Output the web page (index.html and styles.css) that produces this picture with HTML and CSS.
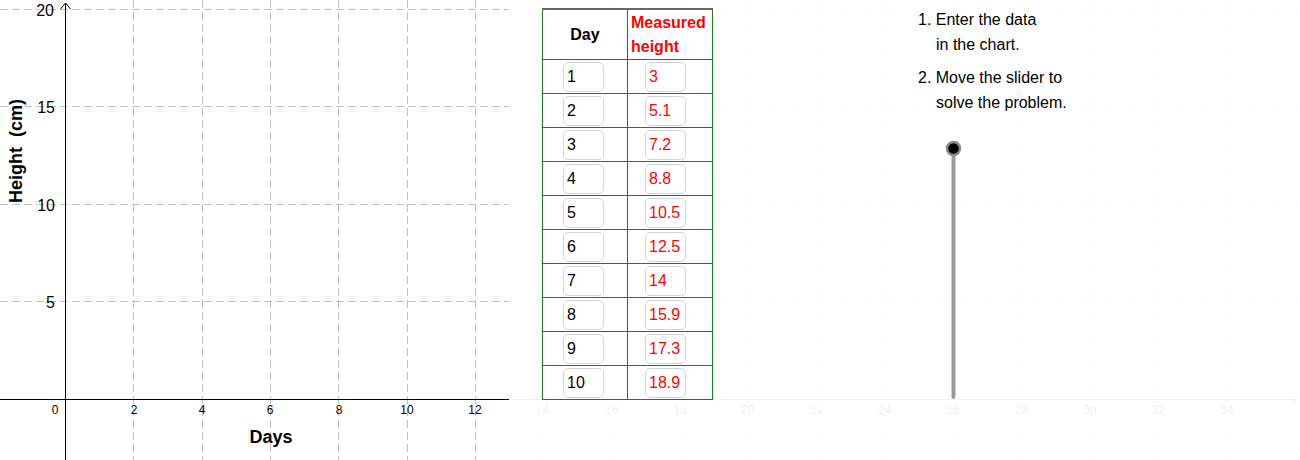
FILE: index.html
```html
<!DOCTYPE html>
<html>
<head>
<link rel="stylesheet" href="styles.css">
</head>
<body>
<div id="applet">
    <svg class="graph" width="1300" height="460" viewBox="0 0 1300 460">
        <!-- grid -->
        <g class="grid">
            <line x1="133.5" y1="0" x2="133.5" y2="460"/>
            <line x1="202.5" y1="0" x2="202.5" y2="460"/>
            <line x1="270.5" y1="0" x2="270.5" y2="460"/>
            <line x1="338.5" y1="0" x2="338.5" y2="460"/>
            <line x1="407.5" y1="0" x2="407.5" y2="460"/>
            <line x1="475.5" y1="0" x2="475.5" y2="460"/>
            <line x1="543.5" y1="0" x2="543.5" y2="460"/>
            <line x1="611.5" y1="0" x2="611.5" y2="460"/>
            <line x1="680.5" y1="0" x2="680.5" y2="460"/>
            <line x1="748.5" y1="0" x2="748.5" y2="460"/>
            <line x1="816.5" y1="0" x2="816.5" y2="460"/>
            <line x1="885.5" y1="0" x2="885.5" y2="460"/>
            <line x1="953.5" y1="0" x2="953.5" y2="460"/>
            <line x1="1021.5" y1="0" x2="1021.5" y2="460"/>
            <line x1="1090.5" y1="0" x2="1090.5" y2="460"/>
            <line x1="1158.5" y1="0" x2="1158.5" y2="460"/>
            <line x1="1226.5" y1="0" x2="1226.5" y2="460"/>
            <line x1="0" y1="9.5" x2="1300" y2="9.5"/>
            <line x1="0" y1="106.5" x2="1300" y2="106.5"/>
            <line x1="0" y1="204.5" x2="1300" y2="204.5"/>
            <line x1="0" y1="301.5" x2="1300" y2="301.5"/>
        </g>
        <!-- axes -->
        <g class="axis">
            <line x1="0" y1="399.5" x2="1297" y2="399.5"/>
            <polyline points="1291,394.5 1297,399.5 1291,404.5"/>
            <line x1="65.5" y1="460" x2="65.5" y2="3"/>
            <polyline points="60.5,9 65.5,3 70.5,9"/>
        </g>
        <g class="xlabels">
            <text x="55" y="414">0</text>
            <text x="134" y="414">2</text>
            <text x="202" y="414">4</text>
            <text x="270" y="414">6</text>
            <text x="339" y="414">8</text>
            <text x="407" y="414">10</text>
            <text x="475" y="414">12</text>
            <text x="543" y="414">14</text>
            <text x="612" y="414">16</text>
            <text x="680" y="414">18</text>
            <text x="748" y="414">20</text>
            <text x="817" y="414">22</text>
            <text x="885" y="414">24</text>
            <text x="953" y="414">26</text>
            <text x="1022" y="414">28</text>
            <text x="1090" y="414">30</text>
            <text x="1158" y="414">32</text>
            <text x="1227" y="414">34</text>
        </g>
        <g class="ylabels">
            <text x="54" y="16">20</text>
            <text x="55" y="113">15</text>
            <text x="55" y="211">10</text>
            <text x="55" y="308">5</text>
        </g>
        <text class="axis-title" x="271" y="443">Days</text>
        <text class="axis-title" transform="translate(22 151) rotate(-90)">Height  (cm)</text>
        <!-- faded right side -->
        <rect class="fade" x="509" y="0" width="791" height="460"/>
        <!-- slider -->
        <line class="slider-track" x1="953.5" y1="149" x2="953.5" y2="397"/>
        <circle class="slider-knob" cx="953.5" cy="148.5" r="6.5"/>
    </svg>

    <table class="data">
        <tr class="head">
            <th class="day">Day</th>
            <th class="height">Measured<br>height</th>
        </tr>
        <tr><td><span class="box">1</span></td><td class="red"><span class="box">3</span></td></tr>
        <tr><td><span class="box">2</span></td><td class="red"><span class="box">5.1</span></td></tr>
        <tr><td><span class="box">3</span></td><td class="red"><span class="box">7.2</span></td></tr>
        <tr><td><span class="box">4</span></td><td class="red"><span class="box">8.8</span></td></tr>
        <tr><td><span class="box">5</span></td><td class="red"><span class="box">10.5</span></td></tr>
        <tr><td><span class="box">6</span></td><td class="red"><span class="box">12.5</span></td></tr>
        <tr><td><span class="box">7</span></td><td class="red"><span class="box">14</span></td></tr>
        <tr><td><span class="box">8</span></td><td class="red"><span class="box">15.9</span></td></tr>
        <tr><td><span class="box">9</span></td><td class="red"><span class="box">17.3</span></td></tr>
        <tr><td><span class="box">10</span></td><td class="red"><span class="box">18.9</span></td></tr>
    </table>

    <div class="steps">
        <p>1. Enter the data<br><span class="indent">in the chart.</span></p>
        <p>2. Move the slider to<br><span class="indent">solve the problem.</span></p>
    </div>
</div>
</body>
</html>
```

FILE: styles.css
```css
body {
    margin: 0;
    background-color: #fff;
    font-family: "Liberation Sans", Arial, sans-serif;
}

#applet {
    position: relative;
    width: 1300px;
    height: 460px;
    overflow: hidden;
}

.graph {
    display: block;
}

.grid line {
    stroke: #c0c0c0;
    stroke-width: 1;
    stroke-dasharray: 8 4;
}

.axis line,
.axis polyline {
    stroke: #000;
    stroke-width: 1;
    fill: none;
}

.xlabels text {
    font-family: "Liberation Sans", Arial, sans-serif;
    font-size: 12px;
    text-anchor: middle;
    fill: #000;
}

.ylabels text {
    font-family: "Liberation Sans", Arial, sans-serif;
    font-size: 16px;
    text-anchor: end;
    fill: #000;
}

.axis-title {
    font-family: "Liberation Sans", Arial, sans-serif;
    font-size: 18px;
    font-weight: bold;
    text-anchor: middle;
    fill: #000;
    white-space: pre;
}

.fade {
    fill: #fff;
    opacity: 0.94;
}

.slider-track {
    stroke: #999;
    stroke-width: 4;
    stroke-linecap: round;
}

.slider-knob {
    fill: #000;
    stroke: #8a8a8a;
    stroke-width: 2.5;
}

.data {
    position: absolute;
    left: 542px;
    top: 8px;
    border-collapse: collapse;
    border-top: 2px solid #666;
    background-color: #fff;
    font-size: 16px;
}

.data th,
.data td {
    border: 1px solid #1a7f1a;
    width: 84px;
    padding: 0;
}

.data tr.head th {
    height: 48px;
    border-top: none;
}

.data th.day {
    text-align: center;
    color: #000;
}

.data th.height {
    text-align: left;
    color: #ff0000;
    line-height: 24px;
    padding: 1px 0 0 3px;
    width: 81px;
}

.data td {
    height: 33px;
    vertical-align: middle;
}

.box {
    display: block;
    box-sizing: border-box;
    width: 41px;
    height: 30px;
    margin-left: 20px;
    padding: 5px 0 0 3px;
    border: 1px solid #d4d4d4;
    border-radius: 5px;
    color: #000;
}

.red .box {
    color: #ff0000;
    margin-left: 17px;
}

.steps {
    position: absolute;
    left: 918px;
    top: 7px;
    font-size: 16px;
    color: #000;
}

.steps p {
    margin: 0 0 8px 0;
    line-height: 25px;
}

.indent {
    padding-left: 18px;
}
```
